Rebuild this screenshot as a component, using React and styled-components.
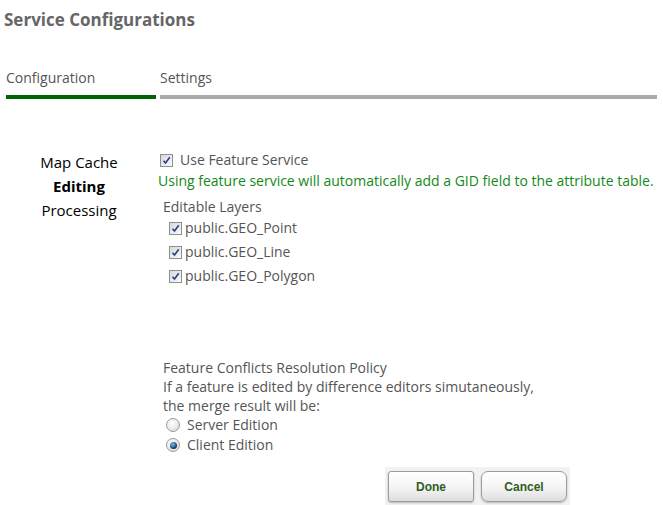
import React from "react";
import styled, { createGlobalStyle } from "styled-components";

const Global = createGlobalStyle`
  body {
    margin: 0;
    background: #fff;
    font-family: "Open Sans", "Noto Sans", sans-serif;
  }
`;

const Page = styled.div`
  width: 663px;
  height: 505px;
  overflow: hidden;
`;

const Title = styled.h1`
  margin: 0;
  padding: 8px 0 0 4px;
  font-size: 17px;
  font-weight: 700;
  color: #666;
  line-height: 24px;
`;

const Tabs = styled.div`
  display: flex;
  gap: 4px;
  margin: 36px 0 0 6px;
  width: 651px;
`;

const Tab = styled.div`
  width: ${(props) => (props.grow ? "auto" : "150px")};
  flex: ${(props) => (props.grow ? "1" : "none")};
  font-size: 14px;
  color: #555;
  line-height: 20px;
  padding: 0 0 7px 0;
  border-bottom: 4px solid ${(props) => (props.active ? "#006400" : "#aaa")};
`;

const Content = styled.div`
  display: grid;
  grid-template-columns: 158px 1fr;
  margin-top: 51px;
`;

const SideNav = styled.ul`
  list-style: none;
  margin: 0;
  padding: 0;
  width: 158px;
  display: flex;
  flex-direction: column;
  align-items: center;
`;

const NavItem = styled.li`
  font-size: 15px;
  line-height: 24px;
  color: #000;
  font-weight: ${(props) => (props.active ? "700" : "400")};
`;

const Panel = styled.div`
  display: flex;
  flex-direction: column;
  font-size: 14px;
  color: #555;
`;

const Row = styled.label`
  display: flex;
  align-items: center;
  gap: ${(props) => props.gap || "6px"};
  padding-left: ${(props) => props.indent || "0"};
  line-height: ${(props) => props.lh || "20px"};
`;

const Note = styled.div`
  color: #138a18;
  line-height: 20px;
  margin-top: 1px;
`;

const Heading = styled.div`
  padding-left: 5px;
  line-height: 19px;
  margin-top: ${(props) => props.top || "0"};
`;

const Box = styled.span`
  width: 11px;
  height: 11px;
  border: 1px solid #8f8f8f;
  background: linear-gradient(135deg, #d8d8d8, #fafafa);
  display: inline-flex;
  align-items: center;
  justify-content: center;
  flex: none;
`;

const Radio = styled.span`
  width: 12px;
  height: 12px;
  border-radius: 50%;
  border: 1px solid #9a9a9a;
  background: radial-gradient(circle at 40% 35%, #fff, #d6d6d6);
  display: inline-flex;
  align-items: center;
  justify-content: center;
  flex: none;

  &::after {
    content: "";
    display: ${(props) => (props.checked ? "block" : "none")};
    width: 7px;
    height: 7px;
    border-radius: 50%;
    background: radial-gradient(circle at 40% 35%, #7cc0f5, #0d2f66 70%);
  }
`;

const Spacer = styled.div`
  height: ${(props) => props.h};
`;

const ButtonBar = styled.div`
  display: flex;
  gap: 7px;
  margin: 12px 0 0 385px;
  padding: 4px 3px;
  background: #f2f2f2;
  width: fit-content;
`;

const Button = styled.button`
  width: 86px;
  height: 31px;
  border: 1px solid #9c9c9c;
  border-radius: ${(props) => (props.round ? "7px" : "3px")};
  background: linear-gradient(#ffffff, #f4f4f4 55%, #dedede);
  box-shadow: 0 1px 2px rgba(0, 0, 0, 0.25);
  font-family: "Liberation Sans", Arial, sans-serif;
  font-weight: 700;
  font-size: 12px;
  color: #2f5d22;
  padding: 0;
`;

const Check = () => (
  <Box>
    <svg width="9" height="9" viewBox="0 0 9 9">
      <path d="M1.5 4.8 L3.5 7 L7.8 1.2" fill="none" stroke="#233f8a" strokeWidth="1.6" />
    </svg>
  </Box>
);

export default function App() {
  return (
    <Page>
      <Global />
      <Title>Service Configurations</Title>
      <Tabs>
        <Tab active>Configuration</Tab>
        <Tab grow>Settings</Tab>
      </Tabs>
      <Content>
        <SideNav>
          <NavItem>Map Cache</NavItem>
          <NavItem active>Editing</NavItem>
          <NavItem>Processing</NavItem>
        </SideNav>
        <Panel>
          <Row gap="7px" indent="2px">
            <Check />
            Use Feature Service
          </Row>
          <Note>Using feature service will automatically add a GID field to the attribute table.</Note>
          <Heading top="6px">Editable Layers</Heading>
          <Row gap="3px" indent="11px" lh="24px">
            <Check />
            public.GEO_Point
          </Row>
          <Row gap="3px" indent="11px" lh="24px">
            <Check />
            public.GEO_Line
          </Row>
          <Row gap="3px" indent="11px" lh="24px">
            <Check />
            public.GEO_Polygon
          </Row>
          <Spacer h="70px" />
          <Heading>Feature Conflicts Resolution Policy</Heading>
          <Heading>If a feature is edited by difference editors simutaneously,</Heading>
          <Heading>the merge result will be:</Heading>
          <Row gap="7px" indent="8px">
            <Radio />
            Server Edition
          </Row>
          <Row gap="7px" indent="8px">
            <Radio checked />
            Client Edition
          </Row>
        </Panel>
      </Content>
      <ButtonBar>
        <Button>Done</Button>
        <Button round>Cancel</Button>
      </ButtonBar>
    </Page>
  );
}
